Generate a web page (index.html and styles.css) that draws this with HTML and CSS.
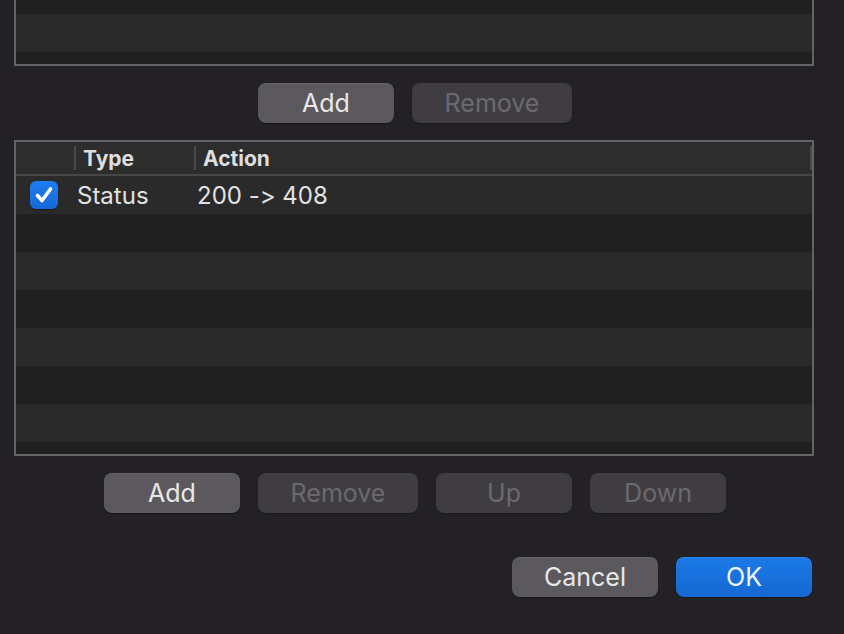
FILE: index.html
```html
<!DOCTYPE html>
<html>
<head>
<meta charset="utf-8">
<link rel="stylesheet" href="styles.css">
</head>
<body>
<div class="page">
  <div class="table table-top">
    <div class="row dark h14"></div>
    <div class="row light"></div>
    <div class="row dark h12"></div>
  </div>

  <div class="btn-row">
    <button class="btn w136">Add</button>
    <button class="btn disabled w160">Remove</button>
  </div>

  <div class="table table-main">
    <div class="header">
      <div class="hcell c-check"></div>
      <div class="hcell c-type"><span class="sep"></span><span class="htext">Type</span></div>
      <div class="hcell c-action"><span class="sep"></span><span class="htext">Action</span></div>
      <span class="sep sep-end"></span>
    </div>
    <div class="body">
      <div class="row light">
        <div class="cell c-check">
          <span class="checkbox">
            <svg width="28" height="28" viewBox="0 0 28 28"><path d="M7.5 14.5 L12 19.5 L20.5 8" fill="none" stroke="#fff" stroke-width="3.6" stroke-linecap="round" stroke-linejoin="round"/></svg>
          </span>
        </div>
        <div class="cell c-type">Status</div>
        <div class="cell c-action">200 -&gt; 408</div>
      </div>
      <div class="row dark"></div>
      <div class="row light"></div>
      <div class="row dark"></div>
      <div class="row light"></div>
      <div class="row dark"></div>
      <div class="row light"></div>
      <div class="row dark h12"></div>
    </div>
  </div>

  <div class="btn-row">
    <button class="btn w136">Add</button>
    <button class="btn disabled w160">Remove</button>
    <button class="btn disabled w136">Up</button>
    <button class="btn disabled w136">Down</button>
  </div>

  <div class="dialog-row">
    <button class="btn w146">Cancel</button>
    <button class="btn primary w136">OK</button>
  </div>
</div>
</body>
</html>
```
FILE: styles.css
```css
html, body {
  margin: 0;
  padding: 0;
  background: #232125;
  width: 844px;
  height: 634px;
  overflow: hidden;
}
body {
  font-family: Inter, "Liberation Sans", sans-serif;
  font-feature-settings: "calt" 0, "liga" 0;
  color: #e2e2e2;
}
.page {
  padding-left: 14px;
  width: 800px;
  display: flex;
  flex-direction: column;
}
.table {
  width: 800px;
  box-sizing: border-box;
  border: 2px solid #646366;
  display: flex;
  flex-direction: column;
}
.table-top {
  border-top: none;
  height: 66px;
}
.row {
  height: 38px;
  flex: none;
  display: flex;
  align-items: center;
}
.row.h14 { height: 14px; }
.row.h12 { height: 12px; }
.light { background: #2a2a2a; }
.dark { background: #202020; }

.btn-row {
  margin-top: 17px;
  display: flex;
  justify-content: center;
  gap: 18px;
  padding-left: 2px;
}
.btn {
  height: 40px;
  border: none;
  border-radius: 8px;
  background: #5b595d;
  color: #e8e8e8;
  font-family: Inter, "Liberation Sans", sans-serif;
  font-feature-settings: "calt" 0;
  font-size: 25px;
  padding: 0;
  box-shadow: 0 1px 1px rgba(0,0,0,0.35), inset 0 1px 0 rgba(255,255,255,0.06);
}
.btn.disabled {
  background: #3f3d41;
  color: #6c6a6e;
  box-shadow: 0 1px 1px rgba(0,0,0,0.25);
}
.btn.primary {
  background: linear-gradient(#1b7ae6, #1668d2);
  color: #f2f6fc;
}
.w136 { width: 136px; }
.w146 { width: 146px; }
.w160 { width: 160px; }

.table-main {
  margin-top: 17px;
  height: 316px;
}
.header {
  height: 32px;
  background: #2d2d2d;
  border-bottom: 2px solid #474747;
  display: flex;
  align-items: center;
  font-weight: 700;
  font-size: 21px;
  color: #dedede;
  flex: none;
}
.hcell {
  display: flex;
  align-items: center;
  height: 100%;
}
.sep {
  width: 2px;
  height: 24px;
  background: #4a4a4a;
  flex: none;
}
.sep-end {
  margin-left: auto;
}
.htext { margin-left: 7px; }
.c-check { width: 58px; flex: none; }
.c-type { width: 120px; flex: none; }
.c-action { flex: 1; }
.body {
  display: flex;
  flex-direction: column;
}
.cell {
  font-size: 24px;
  height: 100%;
  display: flex;
  align-items: center;
  padding-top: 1px;
  box-sizing: border-box;
}
.body .c-check { padding-left: 14px; padding-top: 0; }
.body .c-type { padding-left: 3px; }
.body .c-action { padding-left: 3px; }
.checkbox {
  width: 28px;
  height: 28px;
  border-radius: 6px;
  background: linear-gradient(#1f7ff0, #1667d6);
  display: block;
  box-shadow: 0 1px 1px rgba(0,0,0,0.4);
}
.checkbox svg { display: block; }

.dialog-row {
  margin-top: 44px;
  display: flex;
  justify-content: flex-end;
  gap: 18px;
  padding-right: 2px;
}
```
